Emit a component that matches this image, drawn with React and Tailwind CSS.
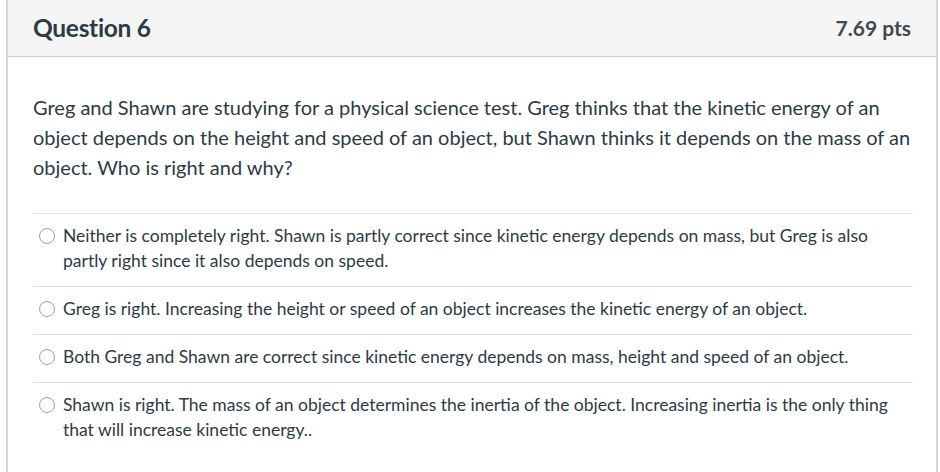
import React from 'react';

const answers = [
  'Neither is completely right. Shawn is partly correct since kinetic energy depends on mass, but Greg is also partly right since it also depends on speed.',
  'Greg is right. Increasing the height or speed of an object increases the kinetic energy of an object.',
  'Both Greg and Shawn are correct since kinetic energy depends on mass, height and speed of an object.',
  'Shawn is right. The mass of an object determines the inertia of the object. Increasing inertia is the only thing that will increase kinetic energy..',
];

export default function App() {
  return (
    <div className="w-[940px] h-[472px] overflow-hidden bg-white font-['Lato','Open_Sans',sans-serif] text-[#2d3b45]">
      <div className="ml-[6px] w-[932px] h-full border-x-2 border-[#d7d7d7] flex flex-col">
        {/* Header */}
        <div className="h-[57px] shrink-0 bg-[#f5f5f5] border-b border-[#c7cdd1] flex items-center justify-between pl-[25px] pr-[25px]">
          <h2 className="text-[24.5px] font-bold tracking-[-0.3px]">Question 6</h2>
          <span className="text-[21px] font-bold text-[#3f4a52]">7.69 pts</span>
        </div>

        {/* Body */}
        <div className="pl-[25px] pr-[22px] pt-[35px]">
          <p className="text-[20px] leading-[30px]">
            Greg and Shawn are studying for a physical science test. Greg thinks that the kinetic energy of an object depends on the height and speed of an object, but Shawn thinks it depends on the mass of an object. Who is right and why?
          </p>

          <div className="mt-[31px] w-[880px]">
            {answers.map((a, i) => (
              <div key={i} className="flex gap-[8px] border-t border-[#e1e4e6] pl-[6px] pr-0 pt-[9px] pb-[13px] text-[17.5px] leading-[25px]">
                <span className="mt-[5px] w-[16px] h-[16px] shrink-0 rounded-full border border-[#9aa0a4] bg-white" />
                <span>{a}</span>
              </div>
            ))}
          </div>
        </div>
      </div>
    </div>
  );
}
